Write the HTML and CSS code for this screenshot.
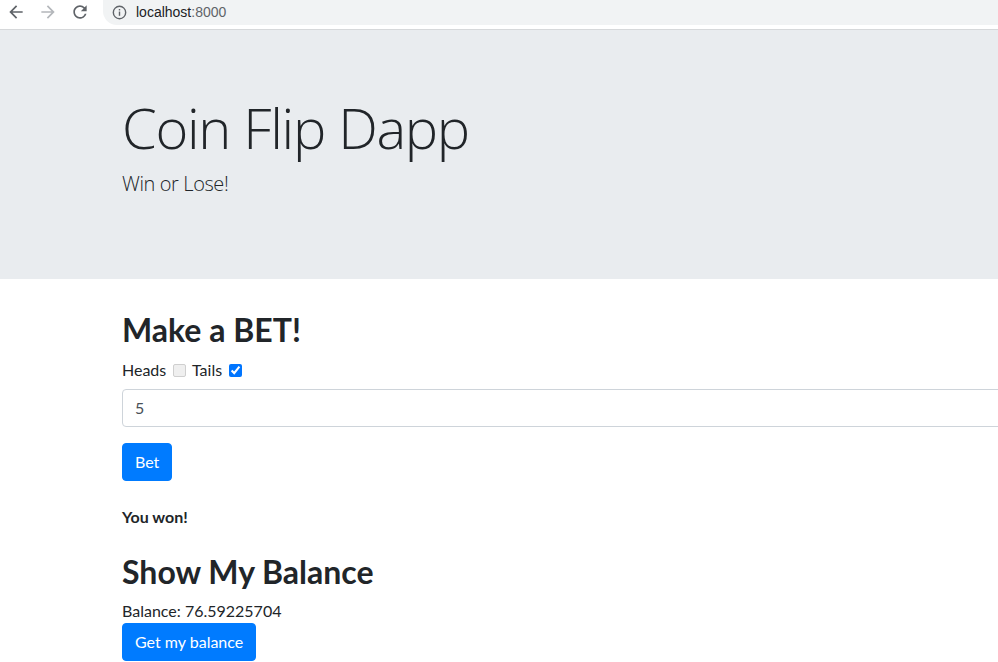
FILE: index.html
```html
<!DOCTYPE html>
<html lang="en">
<head>
    <meta charset="UTF-8">
    <meta name="viewport" content="width=device-width, initial-scale=1.0">
    <title>Coin Flip Dapp</title>
    <link rel="stylesheet" href="styles.css">
</head>
<body>
<div class="browser-bar">
    <div class="nav-buttons">
        <svg class="nav-icon" viewBox="0 0 24 24" width="20" height="20">
            <path d="M20 11H7.83l5.59-5.59L12 4l-8 8 8 8 1.41-1.41L7.83 13H20v-2z" fill="#5f6368"/>
        </svg>
        <svg class="nav-icon" viewBox="0 0 24 24" width="20" height="20">
            <path d="M12 4l-1.41 1.41L16.17 11H4v2h12.17l-5.58 5.59L12 20l8-8z" fill="#b4b7bb"/>
        </svg>
        <svg class="nav-icon" viewBox="0 0 24 24" width="20" height="20">
            <path d="M17.65 6.35A7.958 7.958 0 0 0 12 4c-4.42 0-7.99 3.58-7.99 8s3.570 8 7.99 8c3.73 0 6.84-2.55 7.73-6h-2.08A5.99 5.99 0 0 1 12 18c-3.31 0-6-2.690-6-6s2.690-6 6-6c1.66 0 3.14.69 4.22 1.78L13 11h7V4l-2.35 2.35z" fill="#5f6368"/>
        </svg>
    </div>
    <div class="address">
        <svg class="info-icon" viewBox="0 0 16 16" width="15" height="15">
            <circle cx="8" cy="8" r="6.6" fill="none" stroke="#5f6368" stroke-width="1.5"/>
            <rect x="7.25" y="7" width="1.5" height="4.5" fill="#5f6368"/>
            <rect x="7.25" y="4.3" width="1.5" height="1.5" fill="#5f6368"/>
        </svg>
        <span class="host">localhost</span><span class="port">:8000</span>
    </div>
</div>

<div class="jumbotron">
    <div class="container">
        <h1 class="display">Coin Flip Dapp</h1>
        <p class="lead">Win or Lose!</p>
    </div>
</div>

<div class="container main">
    <h2>Make a BET!</h2>
    <div class="choice">
        <label for="heads">Heads</label>
        <input type="checkbox" id="heads">
        <label for="tails">Tails</label>
        <input type="checkbox" id="tails" checked>
    </div>
    <div class="form-group">
        <input type="number" class="form-control" id="amount" value="5">
    </div>
    <button class="btn" id="betButton">Bet</button>
    <p class="result"><strong>You won!</strong></p>

    <h2 class="balance-title">Show My Balance</h2>
    <div class="balance">Balance: <span id="balance">76.59225704</span></div>
    <button class="btn" id="balanceButton">Get my balance</button>
</div>
</body>
</html>
```

FILE: styles.css
```css
body {
    margin: 0;
    font-family: Lato, "Open Sans", sans-serif;
    font-size: 16px;
    line-height: 1.5;
    color: #212529;
    background-color: #fff;
    overflow: hidden;
}

.browser-bar {
    display: flex;
    height: 29px;
    background-color: #fff;
    border-bottom: 1px solid #d6d8da;
}

.nav-buttons {
    display: flex;
    gap: 12px;
    padding: 2px 0 0 6px;
}

.nav-icon {
    display: block;
}

.address {
    display: flex;
    align-items: center;
    flex: 1;
    height: 25px;
    margin-left: 13px;
    padding-left: 9px;
    background-color: #f1f3f4;
    border-radius: 0 0 0 14px;
    font-family: "Liberation Sans", Arial, sans-serif;
    font-size: 14px;
}

.info-icon {
    margin-right: 9px;
}

.host {
    color: #202124;
}

.port {
    color: #5f6368;
}

.container {
    padding-left: 122px;
}

.jumbotron {
    padding: 64px 0;
    background-color: #e9ecef;
    margin-bottom: 32px;
}

.display {
    margin: 0 0 8px;
    font-family: "Open Sans", sans-serif;
    font-size: 56px;
    font-weight: 300;
    line-height: 1.2;
    letter-spacing: -1.3px;
}

.lead {
    margin: 0 0 16px;
    font-family: "Open Sans", sans-serif;
    font-size: 20px;
    font-weight: 300;
    letter-spacing: -0.4px;
}

h2 {
    margin: 0 0 8px;
    font-size: 32px;
    font-weight: 700;
    line-height: 1.2;
}

.choice {
    height: 24px;
    margin-bottom: 7px;
}

.choice input {
    margin: 0 2px 0 3px;
    vertical-align: -1px;
}

.choice input:not(:checked) {
    appearance: none;
    width: 13px;
    height: 13px;
    background-color: #efefef;
    border: 1px solid #cfcfcf;
    border-radius: 2px;
}

.form-group {
    margin-bottom: 16px;
}

.form-control {
    display: block;
    box-sizing: border-box;
    width: calc(100% + 20px);
    height: 38px;
    padding: 6px 12px;
    font-family: inherit;
    font-size: 16px;
    color: #495057;
    border: 1px solid #ced4da;
    border-radius: 4px;
}

.btn {
    display: block;
    height: 38px;
    padding: 6px 12px;
    font-family: inherit;
    font-size: 16px;
    line-height: 1.5;
    color: #fff;
    background-color: #007bff;
    border: 1px solid #007bff;
    border-radius: 4px;
    cursor: pointer;
}

.result {
    margin: 24px 0 16px;
}

.balance-title {
    margin-top: 24px;
}
```
